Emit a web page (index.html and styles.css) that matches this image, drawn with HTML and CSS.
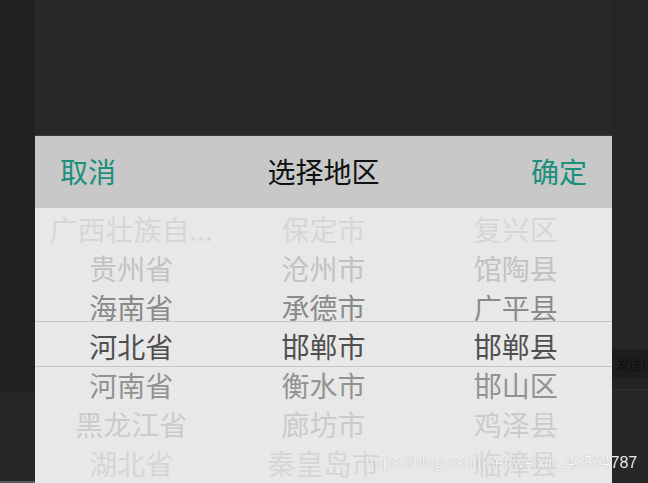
FILE: index.html
```html
<!DOCTYPE html>
<html lang="zh">
<head>
<meta charset="utf-8">
<title>选择地区</title>
<link rel="stylesheet" href="styles.css">
</head>
<body>
<div class="screen">
  <div class="side side-left">
    <div class="side-top"></div>
    <div class="side-bottom"></div>
  </div>
  <div class="main">
    <div class="backdrop"></div>
    <div class="panel">
      <div class="header">
        <span class="action">取消</span>
        <span class="title">选择地区</span>
        <span class="action">确定</span>
      </div>
      <div class="picker">
        <div class="column">
          <div class="item d3">广西壮族自...</div>
          <div class="item d2">贵州省</div>
          <div class="item d1">海南省</div>
          <div class="item sel">河北省</div>
          <div class="item d1b">河南省</div>
          <div class="item d2b">黑龙江省</div>
          <div class="item d3">湖北省</div>
        </div>
        <div class="column">
          <div class="item d3">保定市</div>
          <div class="item d2">沧州市</div>
          <div class="item d1">承德市</div>
          <div class="item sel">邯郸市</div>
          <div class="item d1b">衡水市</div>
          <div class="item d2b">廊坊市</div>
          <div class="item d3">秦皇岛市</div>
        </div>
        <div class="column">
          <div class="item d3">复兴区</div>
          <div class="item d2">馆陶县</div>
          <div class="item d1">广平县</div>
          <div class="item sel">邯郸县</div>
          <div class="item d1b">邯山区</div>
          <div class="item d2b">鸡泽县</div>
          <div class="item d3">临漳县</div>
        </div>
        <div class="sel-line sel-line-top"></div>
        <div class="sel-line sel-line-bottom"></div>
      </div>
    </div>
  </div>
  <div class="side side-right">
    <div class="right-top"></div>
    <div class="right-band">发送(S</div>
    <div class="right-mid"></div>
    <div class="right-bottom"></div>
  </div>
  <div class="watermark">https://blog.csdn.net/weixin_43564787</div>
</div>
</body>
</html>
```

FILE: styles.css
```css
* { box-sizing: border-box; }

html, body {
  margin: 0;
  padding: 0;
  background: #282828;
  width: 648px;
  height: 483px;
  overflow: hidden;
}

.screen {
  position: relative;
  display: flex;
  width: 648px;
  height: 483px;
  font-family: "Noto Sans CJK SC", "Noto Sans", sans-serif;
}

.side {
  display: flex;
  flex-direction: column;
}

.side-left {
  width: 35px;
}

.side-top {
  height: 392px;
  background: #212121;
}

.side-bottom {
  flex: 1;
  background: #262626;
  border-bottom: 2px solid #5a5a5a;
}

.main {
  width: 577px;
  display: flex;
  flex-direction: column;
}

.backdrop {
  height: 136px;
  background: #282828;
  border-bottom: 1px solid #3a3a3a;
}

.panel {
  flex: 1;
  display: flex;
  flex-direction: column;
}

.header {
  height: 72px;
  background: #c8c8c8;
  display: flex;
  align-items: center;
  justify-content: space-between;
  padding: 0 25px 2px 25px;
  font-size: 28px;
  line-height: 1;
}

.action {
  color: #1a8f7c;
}

.title {
  color: #111111;
}

.picker {
  position: relative;
  flex: 1;
  background: #e8e8e8;
  display: grid;
  grid-template-columns: 1fr 1fr 1fr;
  padding-top: 2px;
  overflow: hidden;
}

.column {
  display: flex;
  flex-direction: column;
  align-items: center;
}

.item {
  height: 39px;
  line-height: 39px;
  font-size: 28px;
  white-space: nowrap;
}

.item.sel { color: #4f4f4f; }
.item.d1 { color: #8a8a8a; }
.item.d1b { color: #929292; }
.item.d2 { color: #c2c2c2; }
.item.d2b { color: #cbcbcb; }
.item.d3 { color: #d6d6d6; }

.sel-line {
  position: absolute;
  left: 0;
  right: 0;
  height: 1px;
  background: #c6c6c6;
}

.sel-line-top { top: 113px; }
.sel-line-bottom { top: 158px; }

.side-right {
  width: 36px;
}

.right-top {
  height: 350px;
  background: #262626;
  border-top: 0;
}

.right-band {
  height: 28px;
  background: #1d1d1d;
  color: #0e0e0e;
  font-size: 13px;
  line-height: 28px;
  padding-left: 4px;
  white-space: nowrap;
  overflow: hidden;
}

.right-mid {
  height: 12px;
  background: #232323;
  border-bottom: 1px solid #2e2e2e;
}

.right-bottom {
  flex: 1;
  background: #262626;
}

.watermark {
  position: absolute;
  left: 365px;
  top: 453px;
  font-family: "Liberation Sans", Arial, sans-serif;
  font-size: 16px;
  line-height: 20px;
  color: rgba(255, 255, 255, 0.92);
  text-shadow: 0 0 1px rgba(0, 0, 0, 0.35);
  white-space: nowrap;
}
```
